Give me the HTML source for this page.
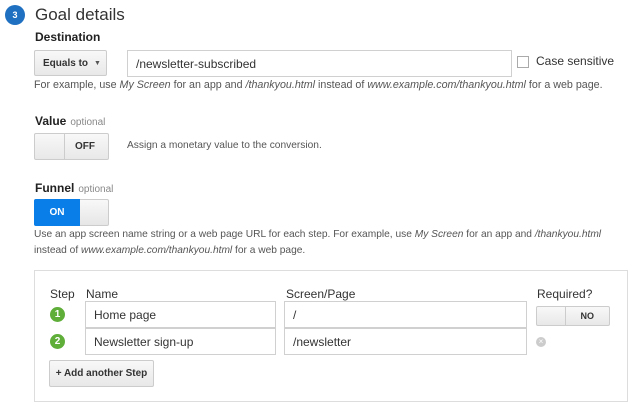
<!DOCTYPE html>
<html><head><style>
body{margin:0;width:640px;height:406px;background:#fff;font-family:"Liberation Sans",sans-serif;color:#333;position:relative;overflow:hidden}
.a{position:absolute;white-space:nowrap}
.inp{position:absolute;border:1px solid #d0d0d0;box-sizing:border-box;background:#fff;font-size:12px;color:#333;padding-left:8px;display:flex;align-items:center}
.help{font-size:10.2px;color:#555}
.lbl{font-size:12px;font-weight:bold;color:#222}
.opt{font-size:10px;color:#888;font-weight:normal;margin-left:4px}
.btn{position:absolute;box-sizing:border-box;border:1px solid #ccc;background:linear-gradient(#f8f8f8,#e8e8e8);border-radius:2px;font-size:10px;font-weight:bold;color:#333;display:flex;align-items:center;justify-content:center}
</style></head><body>
<div class="a" style="left:5px;top:5px;width:20px;height:20px;border-radius:50%;background:#1f70c1;color:#fff;font-size:9px;font-weight:bold;text-align:center;line-height:20px">3</div>
<div class="a" style="left:35px;top:5px;font-size:17px;color:#333">Goal details</div>
<div class="a lbl" style="left:35px;top:30px">Destination</div>
<div class="btn" style="left:34px;top:50px;width:73px;height:26px;justify-content:flex-start;padding-left:8px">Equals to <span style="font-size:7px;margin-left:6px;color:#555">▼</span></div>
<div class="inp" style="left:127px;top:50px;width:385px;height:27px">/newsletter-subscribed</div>
<div class="a" style="left:517px;top:56px;width:12px;height:12px;border:1px solid #aaa;box-sizing:border-box;background:#fff"></div>
<div class="a" style="left:536px;top:54px;font-size:12px">Case sensitive</div>
<div class="a help" style="left:34px;top:79px;font-size:10.7px">For example, use <i>My Screen</i> for an app and <i>/thankyou.html</i> instead of <i>www.example.com/thankyou.html</i> for a web page.</div>
<div class="a lbl" style="left:35px;top:114px">Value<span class="opt">optional</span></div>
<div class="btn" style="left:34px;top:133px;width:75px;height:27px;justify-content:flex-end;padding-right:13px">OFF</div>
<div class="a" style="left:64px;top:134px;width:1px;height:25px;background:#ccc"></div>
<div class="a help" style="left:127px;top:140px">Assign a monetary value to the conversion.</div>
<div class="a lbl" style="left:35px;top:181px">Funnel<span class="opt">optional</span></div>
<div class="btn" style="left:34px;top:199px;width:75px;height:27px;background:linear-gradient(#f8f8f8,#e6e6e6)"></div>
<div class="a" style="left:34px;top:199px;width:46px;height:27px;background:#0a7ee8;border-radius:2px 0 0 2px;color:#fff;font-size:10px;font-weight:bold;text-align:center;line-height:27px">ON</div>
<div class="a help" style="left:34px;top:229px">Use an app screen name string or a web page URL for each step. For example, use <i>My Screen</i> for an app and <i>/thankyou.html</i></div>
<div class="a help" style="left:34px;top:245px">instead of <i>www.example.com/thankyou.html</i> for a web page.</div>
<div class="a" style="left:34px;top:270px;width:594px;height:132px;border:1px solid #ddd;box-sizing:border-box"></div>
<div class="a" style="left:50px;top:287px;font-size:12px">Step</div>
<div class="a" style="left:86px;top:287px;font-size:12px">Name</div>
<div class="a" style="left:286px;top:287px;font-size:12px">Screen/Page</div>
<div class="a" style="left:537px;top:287px;font-size:12px">Required?</div>
<div class="a" style="left:50px;top:307px;width:15px;height:15px;border-radius:50%;background:#5fae3a;color:#fff;font-size:10px;font-weight:bold;text-align:center;line-height:15px">1</div>
<div class="a" style="left:50px;top:334px;width:15px;height:15px;border-radius:50%;background:#5fae3a;color:#fff;font-size:10px;font-weight:bold;text-align:center;line-height:15px">2</div>
<div class="inp" style="left:85px;top:301px;width:191px;height:27px">Home page</div>
<div class="inp" style="left:85px;top:328px;width:191px;height:27px">Newsletter sign-up</div>
<div class="inp" style="left:284px;top:301px;width:243px;height:27px">/</div>
<div class="inp" style="left:284px;top:328px;width:243px;height:27px">/newsletter</div>
<div class="btn" style="left:536px;top:306px;width:74px;height:20px;justify-content:flex-end;padding-right:15px;font-size:9px">NO</div>
<div class="a" style="left:565px;top:307px;width:1px;height:18px;background:#ccc"></div>
<div class="a" style="left:536px;top:337px;width:10px;height:10px;border-radius:50%;background:#ccc;color:#fff;font-size:8px;text-align:center;line-height:10px">×</div>
<div class="btn" style="left:49px;top:360px;width:105px;height:27px">+ Add another Step</div>
</body></html>
